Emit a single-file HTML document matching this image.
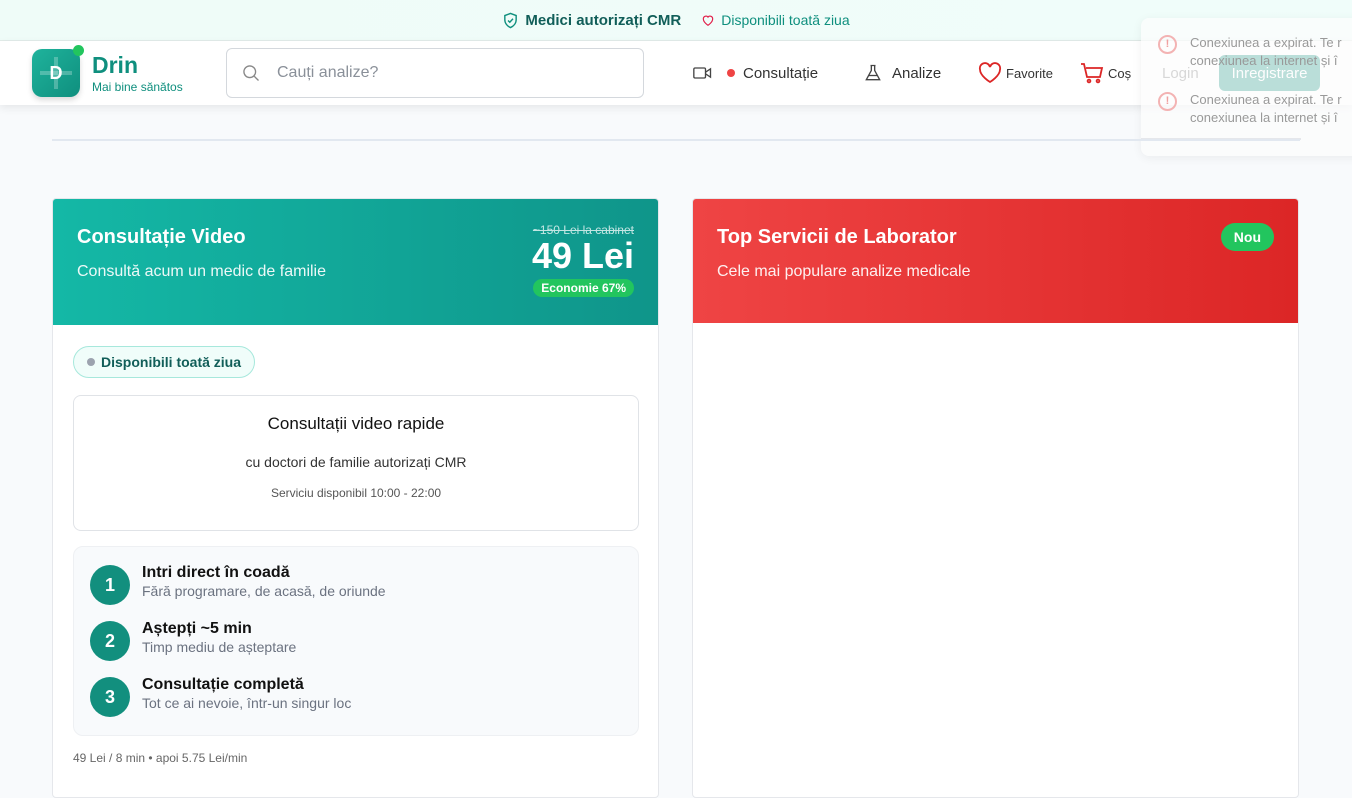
<!DOCTYPE html>
<html><head><meta charset="utf-8"><style>
*{box-sizing:border-box;margin:0;padding:0}
body{width:1352px;height:760px;overflow:hidden;background:#f8fafc;font-family:"Liberation Sans",sans-serif;position:relative}
.top{height:41px;background:linear-gradient(90deg,#effcf8,#f0fdfa);border-bottom:1px solid #e2ece9;display:flex;justify-content:center;align-items:center;gap:20px;font-size:15px}
.top .a{color:#115e59;font-weight:bold;display:flex;align-items:center;gap:6px}
.top .b{color:#0f8f7e;font-size:14px;display:flex;align-items:center;gap:6px}
.hdr{position:absolute;top:41px;left:0;width:1352px;height:64px;background:#fff;box-shadow:0 3px 8px rgba(0,0,0,.08)}
.logo{position:absolute;left:32px;top:8px;width:48px;height:48px;border-radius:10px;background:linear-gradient(135deg,#1fb39c,#0f8f7e);color:#fff;font-weight:bold;font-size:18px;display:flex;align-items:center;justify-content:center;box-shadow:0 3px 6px rgba(0,0,0,.15)}
.logo:after{content:"";position:absolute;right:-4px;top:-4px;width:11px;height:11px;border-radius:50%;background:#22c55e}
.logo i{position:absolute;left:22px;top:8px;width:4px;height:32px;background:rgba(255,255,255,.25)}
.logo u{position:absolute;left:8px;top:22px;width:32px;height:4px;background:rgba(255,255,255,.25)}
.brand{position:absolute;left:92px;top:11px;color:#0f8f7e}
.brand b{font-size:23px;display:block;line-height:26px}
.brand span{font-size:12px}
.search{position:absolute;left:226px;top:7px;width:418px;height:50px;border:1px solid #d4d8dd;border-radius:6px;display:flex;align-items:center;padding-left:14px;gap:16px;color:#8a9099;font-size:16px}
.nav{position:absolute;top:0;height:64px;display:flex;align-items:center;gap:8px;font-size:14px;color:#333}
.toast{position:absolute;left:1141px;top:18px;width:230px;height:138px;background:rgba(252,252,252,.72);border-radius:8px;box-shadow:0 2px 10px rgba(0,0,0,.06);font-size:13px;color:#999;line-height:18px}
.toast .m{position:absolute;left:49px;white-space:nowrap}
.toast .i{position:absolute;left:17px;width:19px;height:19px;border:2px solid #f3b3b3;border-radius:50%;color:#f0a0a0;font-size:11px;text-align:center;line-height:15px;font-weight:bold}
.line{position:absolute;left:52px;top:139px;width:1248px;height:2px;background:#e2e8f0}
.card{position:absolute;top:198px;width:607px;height:600px;background:#fff;border:1px solid #e5e7eb;border-radius:4px;overflow:hidden}
.ch{height:126px;padding:26px 24px;color:#fff;position:relative}
.ch h2{font-size:20px;line-height:24px}
.ch p{font-size:16px;margin-top:14px;opacity:.92}
.pill{position:absolute;left:20px;top:147px;height:32px;padding:0 13px;border:1px solid #a7e8dc;background:#f0fdfa;border-radius:16px;font-size:14px;color:#115e59;font-weight:bold;display:flex;align-items:center;gap:6px}
.box{position:absolute;left:20px;top:196px;width:566px;height:136px;border:1px solid #e0e3e7;border-radius:8px;text-align:center}
.steps{position:absolute;left:20px;top:347px;width:566px;height:190px;background:#f8fafc;border:1px solid #eef0f3;border-radius:10px}
.st{position:absolute;left:16px;display:flex;gap:12px}
.st .n{width:40px;height:40px;border-radius:50%;background:#128f7e;color:#fff;font-weight:bold;font-size:18px;display:flex;align-items:center;justify-content:center;margin-top:2px}
.st b{font-size:16px;color:#111;display:block;line-height:20px}
.st span{font-size:14px;color:#6b7280}
</style></head><body>
<div class="top"><span class="a"><svg width="17" height="17" viewBox="0 0 24 24" fill="none" stroke="#0f8f7e" stroke-width="2"><path d="M12 2l8 3v6c0 5-3.5 9-8 11-4.5-2-8-6-8-11V5z"/><path d="M8.5 12l2.5 2.5 4.5-5"/></svg>Medici autorizați CMR</span><span class="b"><svg width="14" height="14" viewBox="0 0 24 24" fill="none" stroke="#e11d48" stroke-width="2"><path d="M12 21s-8-5-8-11a4.5 4.5 0 018-3 4.5 4.5 0 018 3c0 6-8 11-8 11z"/></svg>Disponibili toată ziua</span></div>
<div class="hdr">
<div class="logo"><i></i><u></u><span style="position:relative">D</span></div>
<div class="brand"><b>Drin</b><span>Mai bine sănătos</span></div>
<div class="search"><svg width="20" height="20" viewBox="0 0 24 24" fill="none" stroke="#888" stroke-width="1.6"><circle cx="10.5" cy="10.5" r="7"/><path d="M16 16l5 5"/></svg>Cauți analize?</div>
<div class="nav" style="left:693px"><svg width="20" height="16" viewBox="0 0 24 18" fill="none" stroke="#444" stroke-width="1.6"><rect x="1" y="3" width="14" height="12" rx="1.5"/><path d="M15 8l6-4v10l-6-4"/></svg><span style="width:8px;height:8px;border-radius:50%;background:#ef4444;margin-left:6px"></span><span style="font-size:15px">Consultație</span></div>
<div class="nav" style="left:862px"><svg width="22" height="20" viewBox="0 0 24 24" fill="none" stroke="#444" stroke-width="1.6"><path d="M9 3h6M10 3v6L4 20h16L14 9V3"/><path d="M6.5 15h11"/></svg><span style="font-size:15px">Analize</span></div>
<div class="nav" style="left:978px;gap:4px"><svg width="24" height="22" viewBox="0 0 24 22" fill="none" stroke="#dc2626" stroke-width="1.8"><path d="M12 20S2 14 2 7.5A5 5 0 0112 5a5 5 0 0110 2.5C22 14 12 20 12 20z"/></svg><span style="font-size:13px">Favorite</span></div>
<div class="nav" style="left:1080px;gap:4px"><svg width="24" height="22" viewBox="0 0 24 22" fill="none" stroke="#dc2626" stroke-width="1.8"><path d="M1 2h3l3 13h13l2-9H6"/><circle cx="9" cy="19" r="1.4"/><circle cx="18" cy="19" r="1.4"/></svg><span style="font-size:13px">Coș</span></div>
<div class="nav" style="left:1162px;font-size:15px;color:#777">Login</div>
<div style="position:absolute;left:1219px;top:14px;width:101px;height:36px;border-radius:6px;background:#0f8f7e;color:#fff;font-size:15px;display:flex;align-items:center;justify-content:center">Inregistrare</div>
</div>
<div class="toast">
<div class="i" style="top:17px">!</div><div class="m" style="top:16px">Conexiunea a expirat. Te r<br>conexiunea la internet și î</div>
<div class="i" style="top:74px">!</div><div class="m" style="top:73px">Conexiunea a expirat. Te r<br>conexiunea la internet și î</div>
<div style="position:absolute;left:0;top:120px;width:160px;height:2px;background:#e5e7eb"></div>
</div>
<div class="line"></div>
<div class="card" style="left:52px">
<div class="ch" style="background:linear-gradient(90deg,#14b8a6,#0f958a)">
<h2>Consultație Video</h2><p>Consultă acum un medic de familie</p>
<div style="position:absolute;right:24px;top:24px;text-align:right">
<div style="font-size:12px;text-decoration:line-through;opacity:.75">~150 Lei la cabinet</div>
<div style="font-size:36px;font-weight:bold;line-height:38px">49 Lei</div>
<div style="display:inline-block;background:#22c55e;border-radius:10px;font-size:12px;font-weight:bold;padding:2px 8px;margin-top:4px">Economie 67%</div></div>
</div>
<div class="pill"><span style="width:8px;height:8px;border-radius:50%;background:#9ca3af"></span>Disponibili toată ziua</div>
<div class="box"><div style="font-size:17px;color:#111;margin-top:18px">Consultații video rapide</div><div style="font-size:14px;color:#333;margin-top:20px">cu doctori de familie autorizați CMR</div><div style="font-size:12px;color:#555;margin-top:16px">Serviciu disponibil 10:00 - 22:00</div></div>
<div class="steps">
<div class="st" style="top:16px"><div class="n">1</div><div><b>Intri direct în coadă</b><span>Fără programare, de acasă, de oriunde</span></div></div>
<div class="st" style="top:72px"><div class="n">2</div><div><b>Aștepți ~5 min</b><span>Timp mediu de așteptare</span></div></div>
<div class="st" style="top:128px"><div class="n">3</div><div><b>Consultație completă</b><span>Tot ce ai nevoie, într-un singur loc</span></div></div>
</div>
<div style="position:absolute;left:20px;top:552px;font-size:12px;color:#666">49 Lei / 8 min • apoi 5.75 Lei/min</div>
</div>
<div class="card" style="left:692px">
<div class="ch" style="background:linear-gradient(90deg,#ef4444,#dc2626);height:124px">
<h2>Top Servicii de Laborator</h2><p>Cele mai populare analize medicale</p>
<div style="position:absolute;right:24px;top:24px;background:#22c55e;border-radius:14px;font-size:14px;font-weight:bold;padding:6px 13px">Nou</div>
</div></div>
</body></html>
